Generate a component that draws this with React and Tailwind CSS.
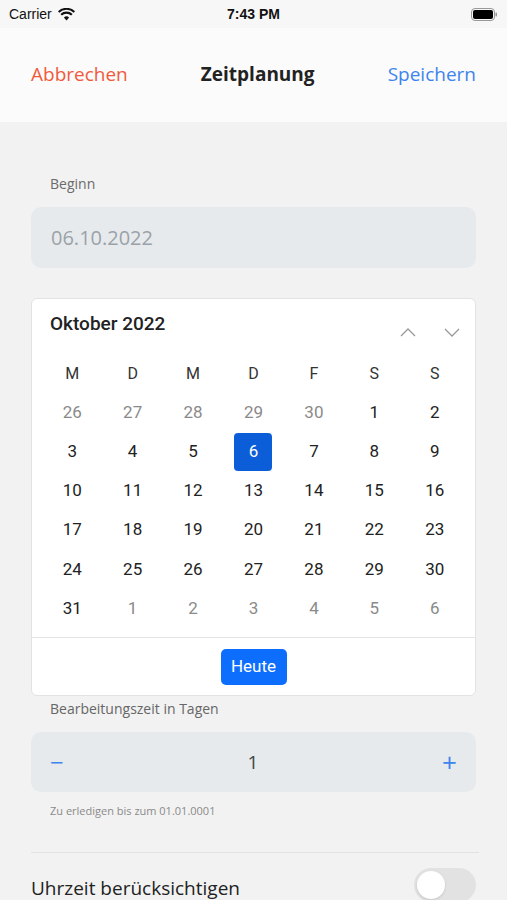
import React from 'react';

const days = [
  [26, 27, 28, 29, 30, 1, 2],
  [3, 4, 5, 6, 7, 8, 9],
  [10, 11, 12, 13, 14, 15, 16],
  [17, 18, 19, 20, 21, 22, 23],
  [24, 25, 26, 27, 28, 29, 30],
  [31, 1, 2, 3, 4, 5, 6],
];

const Wifi = () => (
  <svg width="17" height="13" viewBox="0 0 17 13" className="ml-[6px]">
    <path d="M8.5 12.5l2.6-3a3.6 3.6 0 0 0-5.2 0z" fill="#111" />
    <path d="M3.9 7.6a6.5 6.5 0 0 1 9.2 0l1.5-1.7a8.9 8.9 0 0 0-12.2 0z" fill="#111" />
    <path d="M1.3 4.8a10.3 10.3 0 0 1 14.4 0l1.3-1.6a12.4 12.4 0 0 0-17 0z" fill="#111" />
  </svg>
);

const Battery = () => (
  <svg width="27" height="13" viewBox="0 0 27 13">
    <rect x="0.5" y="0.5" width="23" height="12" rx="3.5" fill="none" stroke="#999" />
    <rect x="2" y="2" width="20" height="9" rx="2" fill="#000" />
    <rect x="24.5" y="4.5" width="1.5" height="4" rx="0.7" fill="#999" />
  </svg>
);

export default function App() {
  const nunito = { fontFamily: '"Open Sans", "Noto Sans", sans-serif' };
  return (
    <div className="w-[507px] h-[900px] overflow-hidden bg-[#f2f2f2]" style={nunito}>
      <div className="bg-[#f7f7f7] h-[28px] flex items-center justify-between px-[9px] relative" style={{ fontFamily: '"Liberation Sans", Arial, sans-serif' }}>
        <div className="flex items-center text-[14px] text-[#111]">Carrier<Wifi /></div>
        <div className="absolute left-0 right-0 text-center text-[14px] font-bold text-[#111]">7:43 PM</div>
        <Battery />
      </div>
      <div className="bg-[#fbfbfb] h-[94px] flex items-center justify-between px-[31px] pb-[2px]">
        <span className="text-[19px] text-[#f05a3c]">Abbrechen</span>
        <span className="text-[19px] font-bold text-[#222]">Zeitplanung</span>
        <span className="text-[19px] text-[#3d84ee]">Speichern</span>
      </div>

      <div className="px-[31px] pt-[52px]">
        <div className="pl-[19px] text-[14px] text-[#6b6b6b] leading-[20px]">Beginn</div>
        <div className="mt-[13px] h-[61px] rounded-[10px] bg-[#e7eaed] flex items-center pl-[20px] text-[20px] text-[#9aa2a8]">
          06.10.2022
        </div>

        <div className="mt-[30px] bg-white rounded-[6px] border border-[#e3e3e3]" style={{ fontFamily: 'Roboto, "Liberation Sans", sans-serif' }}>
          <div className="flex items-start justify-between pl-[18px] pr-[15px] pt-[14px]">
            <div className="text-[19px] font-medium text-[#222] leading-[22px]">Oktober 2022</div>
            <div className="flex gap-[28px] pt-[15px]">
              <svg width="16" height="9" viewBox="0 0 16 9"><path d="M1 8l7-7 7 7" fill="none" stroke="#999" strokeWidth="1.3" /></svg>
              <svg width="16" height="9" viewBox="0 0 16 9"><path d="M1 1l7 7 7-7" fill="none" stroke="#999" strokeWidth="1.3" /></svg>
            </div>
          </div>
          <div className="px-[10px] pt-[24px] pb-[9px]">
            <div className="grid grid-cols-7 text-center text-[16px] text-[#333] h-[26px] items-center">
              {['M', 'D', 'M', 'D', 'F', 'S', 'S'].map((d, i) => <div key={i}>{d}</div>)}
            </div>
            <div className="mt-[6px]">
              {days.map((row, r) => (
                <div key={r} className="grid grid-cols-7 h-[39.2px] items-center">
                  {row.map((d, c) => {
                    const outside = (r === 0 && c < 5) || (r === 5 && c > 0);
                    const sel = r === 1 && c === 3;
                    return (
                      <div key={c} className="flex justify-center">
                        {sel ? (
                          <div className="w-[38px] h-[38px] rounded-[4px] bg-[#0b5ed7] text-white flex items-center justify-center text-[17px]">{d}</div>
                        ) : (
                          <span className={`text-[17px] ${outside ? 'text-[#8a8a8a]' : 'text-[#222]'}`}>{d}</span>
                        )}
                      </div>
                    );
                  })}
                </div>
              ))}
            </div>
          </div>
          <div className="border-t border-[#e5e5e5] h-[58px] flex items-center justify-center">
            <div className="h-[36px] w-[66px] rounded-[5px] bg-[#0d6efd] text-white text-[17px] flex items-center justify-center">Heute</div>
          </div>
        </div>

        <div className="pl-[19px] mt-[3px] text-[14px] text-[#666] leading-[20px]">Bearbeitungszeit in Tagen</div>
        <div className="mt-[13px] h-[60px] rounded-[10px] bg-[#e7eaed] flex items-center justify-between px-[19px]">
          <span className="text-[24px] text-[#3d84ee] leading-none">−</span>
          <span className="text-[19px] text-[#444]">1</span>
          <span className="text-[26px] text-[#3d84ee] leading-none">+</span>
        </div>
        <div className="pl-[19px] mt-[11px] text-[11px] text-[#8a8a8a] leading-[16px]">Zu erledigen bis zum 01.01.0001</div>
        <div className="mt-[33px] border-t border-[#e2e2e2] mr-[-3px]" />
        <div className="flex items-start justify-between pt-[15px]">
          <span className="text-[19px] text-[#222] pt-[6px]">Uhrzeit berücksichtigen</span>
          <div className="w-[62px] h-[34px] rounded-full bg-[#e2e2e2] relative">
            <div className="absolute left-[3px] top-[3px] w-[28px] h-[28px] rounded-full bg-white shadow" />
          </div>
        </div>
      </div>
    </div>
  );
}
